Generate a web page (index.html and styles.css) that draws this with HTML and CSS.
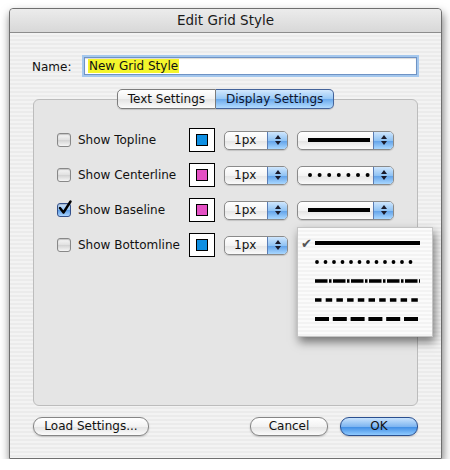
FILE: index.html
```html
<!DOCTYPE html>
<html lang="en">
<head>
    <meta charset="UTF-8">
    <title>Edit Grid Style</title>
    <link rel="stylesheet" href="styles.css">
</head>
<body>
    <div class="window">
        <div class="titlebar">Edit Grid Style</div>
        <div class="content">
            <div class="name-row">
                <span class="name-label">Name:</span>
                <div class="name-field"><span class="selected">New Grid Style</span></div>
            </div>

            <div class="tabs">
                <span class="tab">Text Settings</span>
                <span class="tab active">Display Settings</span>
            </div>

            <div class="group">
                <div class="row">
                    <span class="check"></span>
                    <span class="row-label">Show Topline</span>
                    <span class="swatch"><span class="chip blue"></span></span>
                    <div class="popup size">
                        <span class="value">1px</span>
                        <span class="arrows"><svg width="8" height="12" viewBox="0 0 8 12"><path d="M4 1 L7 5 L1 5 Z M4 11 L7 7 L1 7 Z" fill="#1a1a2a"/></svg></span>
                    </div>
                    <div class="popup style">
                        <span class="value"><svg width="62" height="6" viewBox="0 0 62 6"><rect x="0" y="1" width="62" height="4" fill="#000"/></svg></span>
                        <span class="arrows"><svg width="8" height="12" viewBox="0 0 8 12"><path d="M4 1 L7 5 L1 5 Z M4 11 L7 7 L1 7 Z" fill="#1a1a2a"/></svg></span>
                    </div>
                </div>

                <div class="row">
                    <span class="check"></span>
                    <span class="row-label">Show Centerline</span>
                    <span class="swatch"><span class="chip pink"></span></span>
                    <div class="popup size">
                        <span class="value">1px</span>
                        <span class="arrows"><svg width="8" height="12" viewBox="0 0 8 12"><path d="M4 1 L7 5 L1 5 Z M4 11 L7 7 L1 7 Z" fill="#1a1a2a"/></svg></span>
                    </div>
                    <div class="popup style">
                        <span class="value"><svg width="62" height="6" viewBox="0 0 62 6"><line x1="2" y1="3" x2="60" y2="3" stroke="#000" stroke-width="4" stroke-linecap="round" stroke-dasharray="0 9.6"/></svg></span>
                        <span class="arrows"><svg width="8" height="12" viewBox="0 0 8 12"><path d="M4 1 L7 5 L1 5 Z M4 11 L7 7 L1 7 Z" fill="#1a1a2a"/></svg></span>
                    </div>
                </div>

                <div class="row">
                    <span class="check checked"><svg width="16" height="16" viewBox="0 0 16 16"><path d="M3 8 L6.5 12.5 L13.5 1.5" fill="none" stroke="#000" stroke-width="2.4" stroke-linecap="round" stroke-linejoin="round"/></svg></span>
                    <span class="row-label">Show Baseline</span>
                    <span class="swatch"><span class="chip pink"></span></span>
                    <div class="popup size">
                        <span class="value">1px</span>
                        <span class="arrows"><svg width="8" height="12" viewBox="0 0 8 12"><path d="M4 1 L7 5 L1 5 Z M4 11 L7 7 L1 7 Z" fill="#1a1a2a"/></svg></span>
                    </div>
                    <div class="popup style">
                        <span class="value"><svg width="62" height="6" viewBox="0 0 62 6"><rect x="0" y="1" width="62" height="4" fill="#000"/></svg></span>
                        <span class="arrows"><svg width="8" height="12" viewBox="0 0 8 12"><path d="M4 1 L7 5 L1 5 Z M4 11 L7 7 L1 7 Z" fill="#1a1a2a"/></svg></span>
                    </div>
                </div>

                <div class="row">
                    <span class="check"></span>
                    <span class="row-label">Show Bottomline</span>
                    <span class="swatch"><span class="chip blue"></span></span>
                    <div class="popup size">
                        <span class="value">1px</span>
                        <span class="arrows"><svg width="8" height="12" viewBox="0 0 8 12"><path d="M4 1 L7 5 L1 5 Z M4 11 L7 7 L1 7 Z" fill="#1a1a2a"/></svg></span>
                    </div>
                    <div class="popup style open">
                        <span class="value"><svg width="62" height="6" viewBox="0 0 62 6"><rect x="0" y="1" width="62" height="4" fill="#000"/></svg></span>
                        <span class="arrows"><svg width="8" height="12" viewBox="0 0 8 12"><path d="M4 1 L7 5 L1 5 Z M4 11 L7 7 L1 7 Z" fill="#1a1a2a"/></svg></span>

                        <!-- open line style menu -->
                        <ul class="menu">
                            <li><span class="mark">&#10004;</span><svg width="105" height="6" viewBox="0 0 105 6"><rect x="0" y="1" width="105" height="4" fill="#000"/></svg></li>
                            <li><span class="mark"></span><svg width="105" height="6" viewBox="0 0 105 6"><line x1="2" y1="3" x2="104" y2="3" stroke="#000" stroke-width="3.8" stroke-linecap="round" stroke-dasharray="0 8.5"/></svg></li>
                            <li><span class="mark"></span><svg width="105" height="6" viewBox="0 0 105 6"><line x1="0" y1="3" x2="105" y2="3" stroke="#000" stroke-width="3.6" stroke-dasharray="12.5 1.5 2.5 1.5"/></svg></li>
                            <li><span class="mark"></span><svg width="105" height="6" viewBox="0 0 105 6"><line x1="0" y1="3" x2="105" y2="3" stroke="#000" stroke-width="3.6" stroke-dasharray="6.5 4.2"/></svg></li>
                            <li><span class="mark"></span><svg width="105" height="6" viewBox="0 0 105 6"><line x1="0" y1="3" x2="105" y2="3" stroke="#000" stroke-width="4" stroke-dasharray="14 3.8"/></svg></li>
                        </ul>
                    </div>
                </div>
            </div>

            <div class="buttons">
                <span class="button">Load Settings...</span>
                <span class="spacer"></span>
                <span class="button cancel">Cancel</span>
                <span class="button default">OK</span>
            </div>
        </div>
    </div>
</body>
</html>
```

FILE: styles.css
```css
body {
    margin: 0;
    padding: 0;
    background-color: #fff;
    font-family: "Lucida Grande", "DejaVu Sans", sans-serif;
    font-size: 12px;
    color: #111;
}

.window {
    margin: 8px 0 0 9px;
    width: 431px;
    height: 449px;
    border: 1px solid #6f6f6f;
    border-radius: 4px 4px 0 0;
    background: repeating-linear-gradient(#f3f3f3 0 2px, #ebebeb 2px 4px);
    box-shadow: 1px 5px 10px rgba(0, 0, 0, 0.55);
}

.titlebar {
    height: 23px;
    line-height: 23px;
    text-align: center;
    font-size: 13.5px;
    color: #1a1a1a;
    background: linear-gradient(#ececec, #d8d8d8);
    border-bottom: 1px solid #8c8c8c;
    border-radius: 4px 4px 0 0;
}

.content {
    padding: 22px 22px 0 22px;
}

/* name field */
.name-row {
    display: flex;
    align-items: center;
    height: 22px;
}

.name-label {
    width: 50px;
    padding-top: 1px;
}

.name-field {
    flex: 1;
    height: 16px;
    margin: 0 2px;
    padding: 0 3px;
    display: flex;
    align-items: center;
    background: #fff;
    border: 1px solid #6f93c4;
    box-shadow: 0 0 0 2px #a5c8ee, inset 0 1px 1px rgba(0, 0, 0, 0.15);
}

.selected {
    background-color: #f4f52c;
    padding: 0 1px;
    line-height: 14px;
}

/* tabs */
.tabs {
    display: flex;
    justify-content: center;
    margin-top: 12px;
    position: relative;
    z-index: 1;
}

.tab {
    height: 18px;
    line-height: 18px;
    padding: 0 10px;
    font-size: 12px;
    border: 1px solid #7d7d7d;
    background: linear-gradient(#ffffff, #f1f1f1 50%, #e3e3e3 51%, #fbfbfb);
    border-radius: 5px 0 0 5px;
    box-shadow: 0 1px 1px rgba(0, 0, 0, 0.15);
}

.tab.active {
    border-left: none;
    border-color: #44639a;
    border-radius: 0 5px 5px 0;
    background: linear-gradient(#d2e8fd, #96c7f6 50%, #6aa9ec 51%, #b3dcff);
    color: #0d1530;
}

/* group box */
.group {
    margin: -10px 1px 0 1px;
    padding: 28px 0 0 23px;
    height: 277px;
    background: #e5e5e5;
    border: 1px solid #bcbcbc;
    border-radius: 6px;
}

.row {
    display: flex;
    align-items: center;
    height: 24px;
    margin-bottom: 11px;
}

.check {
    width: 12px;
    height: 12px;
    border: 1px solid #888;
    border-radius: 3px;
    background: linear-gradient(#f7f7f7, #e0e0e0 50%, #d2d2d2 51%, #f5f5f5);
    box-shadow: inset 0 1px 1px rgba(0, 0, 0, 0.2);
    position: relative;
}

.check.checked {
    border-color: #34508a;
    background: linear-gradient(#cfe5fd, #8fc1f3 50%, #5b9ce6 51%, #a8d4ff);
}

.check svg {
    position: absolute;
    left: -1px;
    top: -4px;
}

.row-label {
    width: 111px;
    margin-left: 7px;
}

.swatch {
    width: 24px;
    height: 22px;
    border: 1px solid #000;
    background: #fff;
    display: flex;
    align-items: center;
    justify-content: center;
}

.chip {
    width: 10px;
    height: 10px;
    border: 1px solid #000;
}

.chip.blue {
    background-color: #0f8fe2;
}

.chip.pink {
    background-color: #e451c4;
}

/* popup buttons */
.popup {
    height: 17px;
    display: flex;
    border: 1px solid #8a8a8a;
    border-radius: 5px;
    background: linear-gradient(#ffffff, #f3f3f3 50%, #e4e4e4 51%, #fafafa);
    box-shadow: 0 1px 1px rgba(0, 0, 0, 0.15);
    position: relative;
}

.popup.size {
    width: 62px;
    margin-left: 9px;
}

.popup.style {
    width: 95px;
    margin-left: 9px;
}

.popup .value {
    flex: 1;
    display: flex;
    align-items: center;
    padding-left: 9px;
    line-height: 17px;
}

.popup.style .value {
    padding-left: 10px;
}

.popup .arrows {
    width: 19px;
    display: flex;
    align-items: center;
    justify-content: center;
    border-left: 1px solid #5a7db5;
    border-radius: 0 4px 4px 0;
    background: linear-gradient(#cfe6fd, #90c3f4 50%, #5fa0e8 51%, #a9d7ff);
}

.menu {
    position: absolute;
    left: -1px;
    top: -10px;
    z-index: 2;
    width: 134px;
    height: 102px;
    margin: 0;
    padding: 6px 0 0 0;
    list-style: none;
    background: repeating-linear-gradient(#fbfbfb 0 2px, #f3f3f3 2px 4px);
    border: 1px solid #c4c4c4;
    box-shadow: 2px 5px 9px rgba(0, 0, 0, 0.5);
}

.menu li {
    height: 19px;
    display: flex;
    align-items: center;
}

.menu .mark {
    width: 17px;
    text-align: center;
    font-size: 13px;
    color: #555;
}

/* bottom buttons */
.buttons {
    display: flex;
    margin-top: 11px;
    padding: 0 1px;
}

.button {
    height: 17px;
    line-height: 17px;
    text-align: center;
    border: 1px solid #858585;
    border-radius: 9px;
    background: linear-gradient(#ffffff, #f2f2f2 50%, #e2e2e2 51%, #fbfbfb);
    box-shadow: 0 1px 2px rgba(0, 0, 0, 0.2);
    width: 114px;
}

.spacer {
    flex: 1;
}

.button.cancel {
    width: 76px;
    margin-right: 12px;
}

.button.default {
    width: 76px;
    border-color: #2a4f8f;
    background: linear-gradient(#c9e3fd, #7fb6f1 50%, #3d8be3 51%, #8fcaff);
}
```
